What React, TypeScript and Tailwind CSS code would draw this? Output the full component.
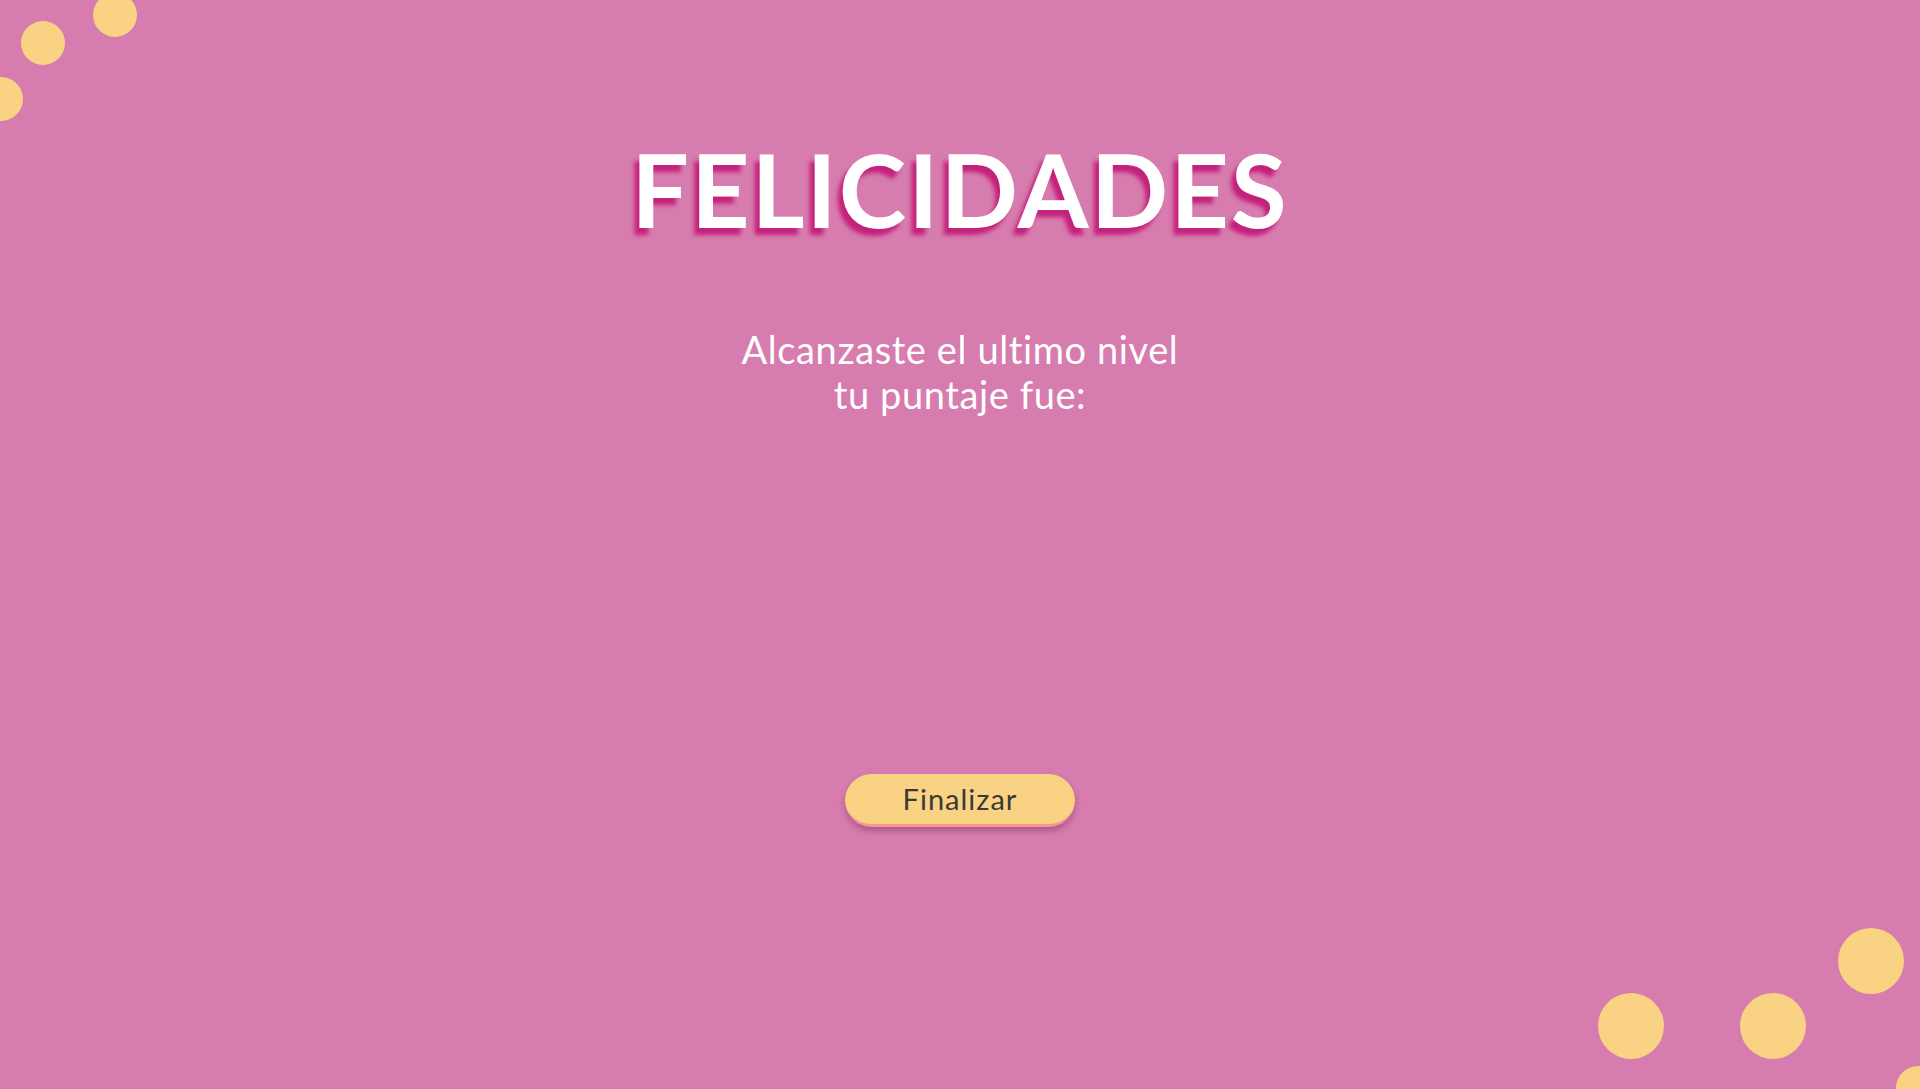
const dots = [
  { cls: "left-[93px] top-[-7px] h-[44px] w-[44px]" },
  { cls: "left-[21px] top-[21px] h-[44px] w-[44px]" },
  { cls: "left-[-21px] top-[77px] h-[44px] w-[44px]" },
  { cls: "left-[1598px] top-[993px] h-[66px] w-[66px]" },
  { cls: "left-[1740px] top-[993px] h-[66px] w-[66px]" },
  { cls: "left-[1838px] top-[928px] h-[66px] w-[66px]" },
  { cls: "left-[1896px] top-[1066px] h-[44px] w-[44px]" },
];

export default function App() {
  return (
    <main
      className="relative flex h-[1089px] w-full flex-col items-center overflow-hidden bg-[#d77cae] text-white"
      style={{ fontFamily: "Lato, 'Noto Sans', sans-serif" }}
    >
      {/* decoration */}
      {dots.map((d, i) => (
        <span key={i} className={`absolute rounded-full bg-[#fad283] ${d.cls}`} />
      ))}

      <h1 className="mt-[129px] text-[102px] font-bold leading-[120px] tracking-[2px] [text-shadow:-5px_7px_4px_#c4217c]">
        FELICIDADES
      </h1>

      <p className="mt-[78px] text-center text-[38px] leading-[45px] tracking-[0.6px]">
        Alcanzaste el ultimo nivel
        <br />
        tu puntaje fue:
      </p>

      <button className="mt-[357px] h-[53px] w-[230px] rounded-full border-b-[3px] border-[#f4978e] bg-[#fad283] text-[29px] tracking-[1px] text-[#3b3a36] shadow-[0_4px_6px_rgba(90,30,70,0.35)]">
        Finalizar
      </button>
    </main>
  );
}
